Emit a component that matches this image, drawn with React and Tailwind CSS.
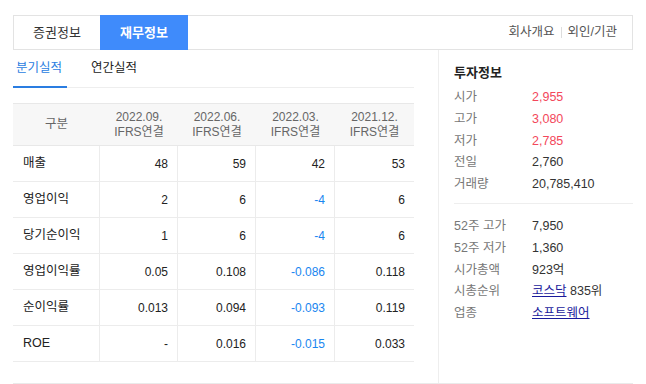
import React from "react";

const F = { fontFamily: '"Liberation Sans", "Noto Sans CJK KR", sans-serif' };

const cols = [
  ["2022.09.", "IFRS연결"],
  ["2022.06.", "IFRS연결"],
  ["2022.03.", "IFRS연결"],
  ["2021.12.", "IFRS연결"],
];

const rows = [
  ["매출", ["48", "59", "42", "53"]],
  ["영업이익", ["2", "6", "-4", "6"]],
  ["당기순이익", ["1", "6", "-4", "6"]],
  ["영업이익률", ["0.05", "0.108", "-0.086", "0.118"]],
  ["순이익률", ["0.013", "0.094", "-0.093", "0.119"]],
  ["ROE", ["-", "0.016", "-0.015", "0.033"]],
];

const info1 = [
  ["시가", "2,955", true],
  ["고가", "3,080", true],
  ["저가", "2,785", true],
  ["전일", "2,760", false],
  ["거래량", "20,785,410", false],
];

function Row({ label, children }) {
  return (
    <div className="flex h-[21.6px] items-center text-[12.5px]">
      <div className="w-[78px] text-[#777]">{label}</div>
      <div>{children}</div>
    </div>
  );
}

export default function App() {
  return (
    <div className="w-[646px] h-[384px] bg-white pt-[15px] px-[13px]" style={F}>
      <div className="flex h-[35px] border border-[#e3e3e3] items-stretch">
        <div className="w-[86px] flex items-center justify-center text-[13px] text-[#333]">증권정보</div>
        <div className="w-[88px] -my-px -mb-px flex items-center justify-center text-[13px] font-bold text-white bg-[#3f8bfb]">재무정보</div>
        <div className="flex-1" />
        <div className="flex items-center pr-[15px] text-[12.5px] text-[#555]">
          <span>회사개요</span>
          <span className="mx-[6px] h-[11px] w-px bg-[#ddd]" />
          <span>외인/기관</span>
        </div>
      </div>
      <div className="flex h-[334px] border-b border-[#eaeaea]">
        <div className="w-[425px] pr-[24px]">
          <div className="flex h-[38px] border-b border-[#eeeeee] items-end text-[12.5px]">
            <div className="w-[54px] h-[38px] flex items-center pl-[3px] text-[#2a7de1] border-b-2 border-[#2a7de1] -mb-px">분기실적</div>
            <div className="h-[38px] flex items-center ml-[24px] text-[#222]">연간실적</div>
          </div>
          <div className="mt-[15px] text-[12px]">
            <div className="flex h-[43px] bg-[#f7f7f7] border-t border-b border-[#e8e8e8] text-[#666]">
              <div className="w-[87px] flex items-center justify-center text-[12.5px]">구분</div>
              {cols.map((c, i) => (
                <div key={i} className={`${i < 2 ? "w-[78px]" : "w-[79px]"} flex flex-col items-center justify-center leading-[15px]`}>
                  <span>{c[0]}</span>
                  <span>{c[1]}</span>
                </div>
              ))}
            </div>
            {rows.map(([label, vals], r) => (
              <div key={r} className="flex h-[36px] border-b border-[#ececec]">
                <div className="w-[87px] border-r border-[#ececec] flex items-center pl-[10px] text-[12.5px] text-[#222]">{label}</div>
                {vals.map((v, i) => (
                  <div
                    key={i}
                    className={`${i < 2 ? "w-[78px]" : "w-[79px]"} ${i < 3 ? "border-r border-[#ececec]" : ""} flex items-center justify-end pr-[9px] ${v.startsWith("-") && v.length > 1 ? "text-[#1a86f0]" : "text-[#222]"}`}
                  >
                    {v}
                  </div>
                ))}
              </div>
            ))}
          </div>
        </div>
        <div className="flex-1 border-l border-[#eeeeee] pl-[15px]">
          <div className="mt-[12px] h-[21px] flex items-center text-[13px] font-bold text-[#222]">투자정보</div>
          <div className="mt-[4px] pb-[8px] border-b border-[#eeeeee]">
            {info1.map(([l, v, red]) => (
              <Row key={l} label={l}>
                <span className={red ? "text-[#f3475b]" : "text-[#333]"}>{v}</span>
              </Row>
            ))}
          </div>
          <div className="mt-[12px]">
            <Row label="52주 고가"><span className="text-[#333]">7,950</span></Row>
            <Row label="52주 저가"><span className="text-[#333]">1,360</span></Row>
            <Row label="시가총액"><span className="text-[#333]">923억</span></Row>
            <Row label="시총순위">
              <span className="text-[#1a1a9c] underline">코스닥</span>
              <span className="text-[#333]"> 835위</span>
            </Row>
            <Row label="업종"><span className="text-[#1a1a9c] underline">소프트웨어</span></Row>
          </div>
        </div>
      </div>
    </div>
  );
}
